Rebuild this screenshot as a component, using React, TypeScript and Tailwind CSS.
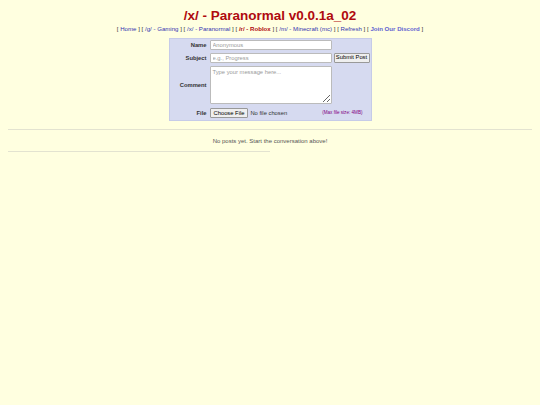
const links = [
  { label: "Home", active: false },
  { label: "/g/ - Gaming", active: false },
  { label: "/x/ - Paranormal", active: false },
  { label: "/r/ - Roblox", active: true },
  { label: "/m/ - Minecraft (mc)", active: false },
  { label: "Refresh", active: false },
];

export default function App() {
  return (
    <div className="min-h-[405px] bg-[#ffffe0] px-2 pt-[8px] font-['Liberation_Sans',Arial,sans-serif] text-black">
      <h1 className="text-center text-[13.5px] leading-[16px] font-bold text-[#af0a0f]">
        /x/ - Paranormal v0.0.1a_02
      </h1>
      <div className="mt-[0px] text-center text-[6.1px] leading-[9px] text-[#333]">
        {links.map((l) => (
          <span key={l.label}>
            [{" "}
            <a className={l.active ? "font-bold text-[#af0a0f]" : "text-[#3434b0]"}>{l.label}</a>{" "}
            ]{" "}
          </span>
        ))}
        <span>
          [ <a className="font-bold text-[#5f5fd0]">Join Our Discord</a> ]
        </span>
      </div>

      <div className="mt-[5px] flex justify-center">
        <div className="w-[203px] border border-[#c6cbe8] bg-[#d6daf0] px-[1px] pt-[1px] pb-[2px]">
          <div className="grid grid-cols-[37px_1fr] gap-x-[2px] gap-y-[3px] text-[5.8px]">
            <div className="flex items-center justify-end pr-[1px] font-bold text-[#333]">Name</div>
            <div className="flex items-center">
              <input
                placeholder="Anonymous"
                className="h-[10px] w-[122px] rounded-[1px] border border-[#bbb] bg-white px-[2px] text-[5.8px] placeholder:text-[#999] outline-none"
              />
            </div>
            <div className="flex items-center justify-end pr-[1px] font-bold text-[#333]">Subject</div>
            <div className="flex items-center gap-[2px]">
              <input
                placeholder="e.g., Progress"
                className="h-[10px] w-[122px] rounded-[1px] border border-[#bbb] bg-white px-[2px] text-[5.8px] placeholder:text-[#999] outline-none"
              />
              <button className="h-[10px] w-[36px] rounded-[1px] border border-[#999] bg-[#efefef] text-[5.8px] leading-none text-black">
                Submit Post
              </button>
            </div>
            <div className="flex items-center justify-end pr-[1px] font-bold text-[#333]">Comment</div>
            <div className="pb-[1px]">
              <textarea
                placeholder="Type your message here..."
                className="block h-[38px] w-[122px] resize rounded-[1px] border border-[#bbb] bg-white px-[2px] py-[1px] text-[5.8px] placeholder:text-[#999] outline-none"
              />
            </div>
            <div className="flex items-center justify-end pr-[1px] font-bold text-[#333]">File</div>
            <div className="flex items-center">
              <span className="flex h-[10px] items-center rounded-[1px] border border-[#999] bg-[#efefef] px-[3px] text-black">
                Choose File
              </span>
              <span className="ml-[2px] text-[#333]">No file chosen</span>
              <span className="ml-auto mr-[7px] text-[4.6px] text-[#800080]">(Max file size: 4MB)</span>
            </div>
          </div>
        </div>
      </div>

      <hr className="mt-[8px] border-t border-[#e3e3d0]" />
      <p className="pt-[7px] pb-[6px] text-center text-[6px] leading-[8px] text-[#555]">
        No posts yet. Start the conversation above!
      </p>
      <hr className="w-[262px] border-t border-[#e3e3d0]" />
    </div>
  );
}
